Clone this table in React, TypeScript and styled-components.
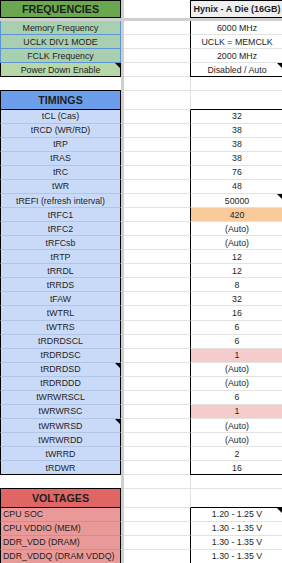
import React from "react"
import styled, { createGlobalStyle, css } from "styled-components"

const GRID = "#e2e2e2"
const INK = "#000"
const SELECT = "#5b95d6"
const ROW_H = 14.07

const GlobalStyle = createGlobalStyle`
  html, body {
    margin: 0;
    padding: 0;
    background: #fff;
  }
`

const Sheet = styled.div`
  width: 282px;
  height: 563px;
  overflow: hidden;
  background: #fff;
  font-family: "Liberation Sans", Arial, sans-serif;
  color: #1e1e1e;
`

const Row = styled.div<{ $h?: number }>`
  display: grid;
  grid-template-columns: 121px 3px 66px 93px;
  height: ${p => p.$h ?? ROW_H}px;
`

const FreezeBar = styled.div`
  height: 3px;
  width: 283px;
  background: #cfcfcf;
`

const FreezeCol = styled.div`
  background: #cfcfcf;
`

type CellProps = {
  $bg?: string
  $bold?: boolean
  $size?: number
  $align?: "left" | "center"
  $top?: string
  $bottom?: string
  $left?: string
  $right?: string
  $note?: boolean
}

const Cell = styled.div<CellProps>`
  position: relative;
  box-sizing: border-box;
  display: flex;
  align-items: center;
  justify-content: ${p => (p.$align === "left" ? "flex-start" : "center")};
  padding: 0 2px;
  overflow: hidden;
  white-space: nowrap;
  background: ${p => p.$bg ?? "#fff"};
  font-size: ${p => p.$size ?? 8.8}px;
  font-weight: ${p => (p.$bold ? 700 : 400)};
  border-top: ${p => (p.$top ? `1px solid ${p.$top}` : "none")};
  border-bottom: 1px solid ${p => p.$bottom ?? GRID};
  border-left: ${p => (p.$left ? `1px solid ${p.$left}` : "none")};
  border-right: ${p => (p.$right ? `1px solid ${p.$right}` : "none")};

  ${p =>
    p.$note &&
    css`
      &::after {
        content: "";
        position: absolute;
        top: 0;
        right: ${p.$right ? 0 : 1}px;
        border-style: solid;
        border-width: 0 5px 5px 0;
        border-color: transparent #000 transparent transparent;
      }
    `}
`

const Blank = styled(Cell)``

type Timing = { name: string; value: string; fill?: string; nameNote?: boolean; valueNote?: boolean }

const freq = [
  { name: "Memory Frequency", value: "6000 MHz", selected: true },
  { name: "UCLK DIV1 MODE", value: "UCLK = MEMCLK", selected: true },
  { name: "FCLK Frequency", value: "2000 MHz", selected: true },
  { name: "Power Down Enable", value: "Disabled / Auto", selected: false }
]

const ORANGE = "#f9cb9c"
const PINK = "#f4cccc"

const timings: Timing[] = [
  { name: "tCL (Cas)", value: "32" },
  { name: "tRCD (WR/RD)", value: "38" },
  { name: "tRP", value: "38" },
  { name: "tRAS", value: "38" },
  { name: "tRC", value: "76" },
  { name: "tWR", value: "48" },
  { name: "tREFI (refresh interval)", value: "50000", valueNote: true },
  { name: "tRFC1", value: "420", fill: ORANGE },
  { name: "tRFC2", value: "(Auto)" },
  { name: "tRFCsb", value: "(Auto)" },
  { name: "tRTP", value: "12" },
  { name: "tRRDL", value: "12" },
  { name: "tRRDS", value: "8" },
  { name: "tFAW", value: "32" },
  { name: "tWTRL", value: "16" },
  { name: "tWTRS", value: "6" },
  { name: "tRDRDSCL", value: "6" },
  { name: "tRDRDSC", value: "1", fill: PINK },
  { name: "tRDRDSD", value: "(Auto)", nameNote: true },
  { name: "tRDRDDD", value: "(Auto)" },
  { name: "tWRWRSCL", value: "6" },
  { name: "tWRWRSC", value: "1", fill: PINK },
  { name: "tWRWRSD", value: "(Auto)", nameNote: true },
  { name: "tWRWRDD", value: "(Auto)" },
  { name: "tWRRD", value: "2" },
  { name: "tRDWR", value: "16" }
]

const voltages = [
  { name: "CPU SOC", value: "1.20 - 1.25 V", note: true },
  { name: "CPU VDDIO (MEM)", value: "1.30 - 1.35 V" },
  { name: "DDR_VDD (DRAM)", value: "1.30 - 1.35 V" },
  { name: "DDR_VDDQ (DRAM VDDQ)", value: "1.30 - 1.35 V" }
]

const SectionHead: React.FC<{ title: string; color: string }> = ({ title, color }) => (
  <Row $h={18.3}>
    <Cell $bg={color} $bold $size={10.7} $left={INK} $right={INK} $bottom={INK}>
      {title}
    </Cell>
    <FreezeCol />
    <Blank />
    <Blank $left={GRID} $bottom={INK} />
  </Row>
)

const Spacer: React.FC = () => (
  <Row>
    <Blank $bottom={INK} />
    <FreezeCol />
    <Blank />
    <Blank $left={GRID} />
  </Row>
)

const App: React.FC = () => {
  return (
    <Sheet>
      <GlobalStyle />
      <Row $h={18}>
        <Cell $bg="#6aa84f" $bold $size={10.7} $top={INK} $left={INK} $right={INK} $bottom={INK}>
          FREQUENCIES
        </Cell>
        <FreezeCol />
        <Blank $bottom="transparent" />
        <Cell $bg="#efefef" $bold $size={9} $top={INK} $left={INK} $bottom={INK}>
          Hynix - A Die (16GB)
        </Cell>
      </Row>
      <FreezeBar />

      {freq.map((f, i) => {
        const last = i === freq.length - 1
        const edge = f.selected ? SELECT : INK
        return (
          <Row key={f.name}>
            <Cell
              $bg={f.selected ? "#a8cfb0" : "#b6d7a8"}
              $left={edge}
              $right={edge}
              $bottom={last ? INK : SELECT}
              $note={last}
            >
              {f.name}
            </Cell>
            <FreezeCol />
            <Blank />
            <Cell $left={INK} $bottom={last ? INK : GRID} $note={last}>
              {f.value}
            </Cell>
          </Row>
        )
      })}

      <Spacer />
      <SectionHead title="TIMINGS" color="#6d9eeb" />

      {timings.map((t, i) => {
        const last = i === timings.length - 1
        return (
          <Row key={t.name}>
            <Cell $bg="#c9daf8" $left={INK} $right={INK} $bottom={last ? INK : "#b3c5e6"} $note={t.nameNote}>
              {t.name}
            </Cell>
            <FreezeCol />
            <Blank />
            <Cell $bg={t.fill} $left={INK} $bottom={last ? INK : GRID} $note={t.valueNote}>
              {t.value}
            </Cell>
          </Row>
        )
      })}

      <Spacer />
      <SectionHead title="VOLTAGES" color="#e06666" />

      {voltages.map(v => (
        <Row key={v.name}>
          <Cell $bg="#ea9999" $align="left" $left={INK} $right={INK} $bottom="#d88989">
            {v.name}
          </Cell>
          <FreezeCol />
          <Blank />
          <Cell $left={INK} $note={v.note}>
            {v.value}
          </Cell>
        </Row>
      ))}
    </Sheet>
  )
}

export default App
